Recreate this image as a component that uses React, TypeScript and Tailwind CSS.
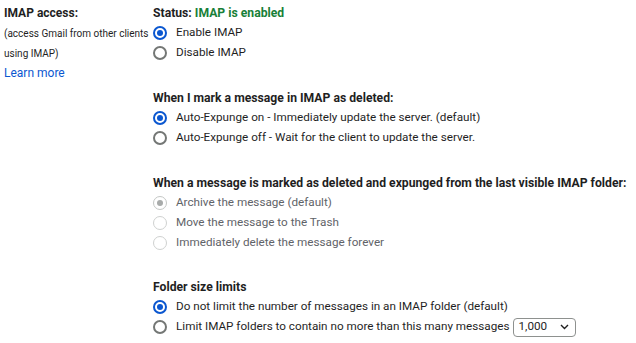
import React from "react"

type Opt = { label: string; checked?: boolean; disabled?: boolean }

function Radio({ checked, disabled }: { checked?: boolean; disabled?: boolean }) {
    if (checked && disabled) {
        return (
            <span className="w-[14px] h-[14px] rounded-full border-[1.5px] border-[#c4c7c5] flex items-center justify-center shrink-0">
                <span className="w-[6px] h-[6px] rounded-full bg-[#a8abaa]" />
            </span>
        )
    }
    if (checked) {
        return (
            <span className="w-[14px] h-[14px] rounded-full border-2 border-[#0b57d0] flex items-center justify-center shrink-0">
                <span className="w-[6px] h-[6px] rounded-full bg-[#0b57d0]" />
            </span>
        )
    }
    return (
        <span
            className={
                disabled
                    ? "w-[14px] h-[14px] rounded-full border-[1.5px] border-[#cfd1d0] shrink-0"
                    : "w-[14px] h-[14px] rounded-full border-2 border-[#747775] shrink-0"
            }
        />
    )
}

function Option({ label, checked, disabled, children }: Opt & { children?: React.ReactNode }) {
    return (
        <div className="h-[20px] flex items-center whitespace-nowrap">
            <Radio checked={checked} disabled={disabled} />
            <span className={disabled ? "ml-[9px] text-[#5f6368]" : "ml-[9px] text-[#1f1f1f]"}>{label}</span>
            {children}
        </div>
    )
}

function Heading({ children }: { children: React.ReactNode }) {
    return (
        <div className="h-[20px] flex items-center font-bold text-[12.2px] text-[#1f1f1f] whitespace-nowrap">
            {children}
        </div>
    )
}

export default function App() {
    return (
        <div className="w-[636px] h-[343px] bg-white pt-[3px] flex text-[11.7px] font-['Roboto',sans-serif]">
            <div className="w-[152px] pl-[4px] shrink-0">
                <div className="h-[20px] flex items-center font-bold text-[12px] text-[#1f1f1f]">IMAP access:</div>
                <div className="h-[20px] flex items-center text-[10px] text-[#1f1f1f] whitespace-nowrap">
                    (access Gmail from other clients
                </div>
                <div className="h-[20px] flex items-center text-[10px] text-[#1f1f1f]">using IMAP)</div>
                <div className="h-[20px] flex items-center text-[12px] text-[#0b57d0]">Learn more</div>
            </div>

            <div className="flex-1 pl-[1px]">
                <Heading>
                    Status:&nbsp;<span className="text-[#188038]">IMAP is enabled</span>
                </Heading>
                <Option label="Enable IMAP" checked />
                <Option label="Disable IMAP" />

                <div className="mt-[25px]">
                    <Heading>When I mark a message in IMAP as deleted:</Heading>
                    <Option label="Auto-Expunge on - Immediately update the server. (default)" checked />
                    <Option label="Auto-Expunge off - Wait for the client to update the server." />
                </div>

                <div className="mt-[25px]">
                    <Heading>When a message is marked as deleted and expunged from the last visible IMAP folder:</Heading>
                    <Option label="Archive the message (default)" checked disabled />
                    <Option label="Move the message to the Trash" disabled />
                    <Option label="Immediately delete the message forever" disabled />
                </div>

                <div className="mt-[24px]">
                    <Heading>Folder size limits</Heading>
                    <Option label="Do not limit the number of messages in an IMAP folder (default)" checked />
                    <Option label="Limit IMAP folders to contain no more than this many messages">
                        <div className="ml-[3px] w-[63px] h-[19px] border border-[#8e918f] rounded-[4px] flex items-center justify-between pl-[5px] pr-[6px] text-[#1f1f1f]">
                            <span>1,000</span>
                            <svg width="9" height="6" viewBox="0 0 9 6" fill="none">
                                <path d="M1 1l3.5 3.5L8 1" stroke="#1f1f1f" strokeWidth="1.4" />
                            </svg>
                        </div>
                    </Option>
                </div>
            </div>
        </div>
    )
}
